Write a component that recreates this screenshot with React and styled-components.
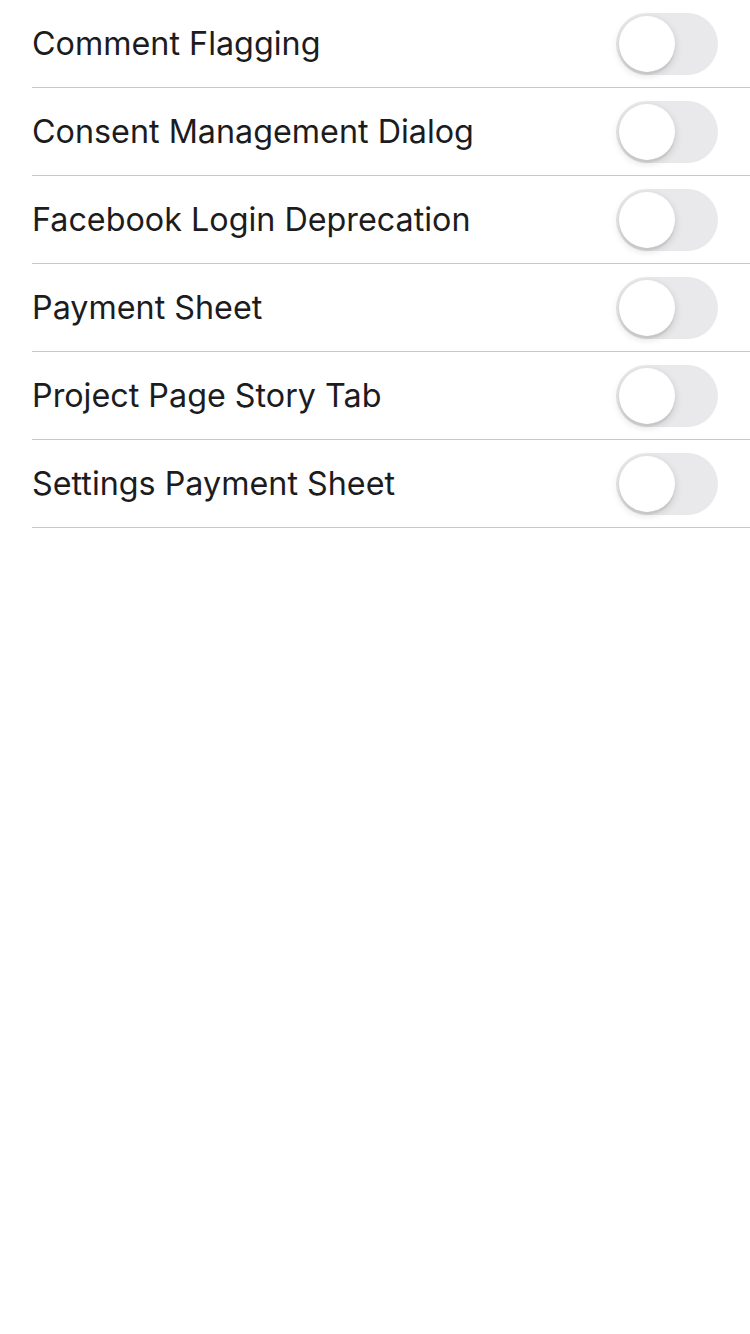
import React from 'react';
import styled, { createGlobalStyle } from 'styled-components';

const GlobalStyle = createGlobalStyle`
  html, body {
    margin: 0;
    padding: 0;
    background: #ffffff;
  }
  body {
    font-family: Inter, "Noto Sans", sans-serif;
    -webkit-font-smoothing: antialiased;
  }
`;

const List = styled.div`
  display: flex;
  flex-direction: column;
  padding-left: 32px;
  background: #ffffff;
`;

const Row = styled.div`
  display: flex;
  align-items: center;
  justify-content: space-between;
  height: 87px;
  border-bottom: 1px solid #c8c8cb;
  padding-right: 32px;
`;

const Label = styled.span`
  font-size: 32.3px;
  color: #1c1c1e;
  letter-spacing: 0;
`;

const Track = styled.div`
  position: relative;
  width: 102px;
  height: 62px;
  border-radius: 31px;
  background: ${({ on }) => (on ? '#34c759' : '#e9e9eb')};
  flex-shrink: 0;
`;

const Knob = styled.div`
  position: absolute;
  top: 3px;
  left: ${({ on }) => (on ? '43px' : '3px')};
  width: 56px;
  height: 56px;
  border-radius: 50%;
  background: #ffffff;
  box-shadow: 0 3px 8px rgba(0, 0, 0, 0.15), 0 3px 1px rgba(0, 0, 0, 0.06);
`;

const Toggle = ({ on }) => (
  <Track on={on ? 1 : 0}>
    <Knob on={on ? 1 : 0} />
  </Track>
);

const features = [
  'Comment Flagging',
  'Consent Management Dialog',
  'Facebook Login Deprecation',
  'Payment Sheet',
  'Project Page Story Tab',
  'Settings Payment Sheet',
];

const App = () => (
  <>
    <GlobalStyle />
    <List>
      {features.map((name) => (
        <Row key={name}>
          <Label>{name}</Label>
          <Toggle on={false} />
        </Row>
      ))}
    </List>
  </>
);

export default App;
